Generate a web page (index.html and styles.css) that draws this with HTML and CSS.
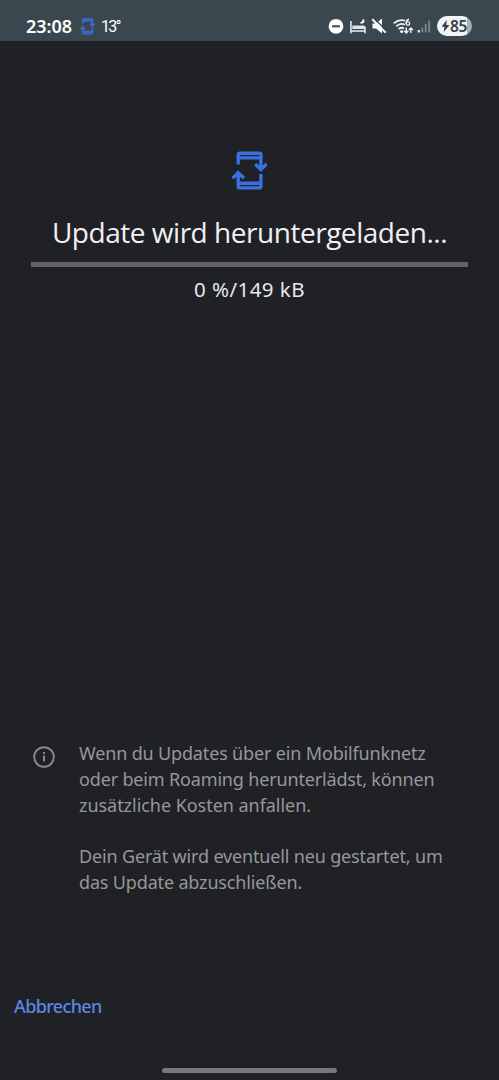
FILE: index.html
```html
<!DOCTYPE html>
<html lang="de">
<head>
<meta charset="utf-8">
<title>Systemupdate</title>
<link rel="stylesheet" href="styles.css">
</head>
<body>
<div class="screen">
  <header class="status">
    <span class="clock">23:08</span>
    <svg class="status-update" width="15" height="18" viewBox="0 0 35 40" fill="none" stroke="#3b68c8" stroke-width="4.400">
      <path d="M6.200 14.500V5a1.700 1.700 0 0 1 1.700-1.700h19.300a1.700 1.700 0 0 1 1.700 1.700V18M6.200 7.900h22.700M28.900 24V36.200a1.700 1.700 0 0 1-1.700 1.700H7.900a1.700 1.700 0 0 1-1.700-1.700V22M6.200 33.300h22.700M23.200 14.500l5.700 5.700 5.700-5.700M.5 27.800l5.700-5.700 5.700 5.700"/>
    </svg>
    <span class="temp">13°</span>
    <div class="tray">
      <svg width="107" height="24" viewBox="328 14 107 24">
        <circle cx="336" cy="26.300" r="7.400" fill="#fff"/>
        <path d="M332 26.300h8" stroke="#3b474e" stroke-width="2"/>
        <path d="M350.900 21v12.300M350.700 30.900H365.500M365 26.500v6.800" fill="none" stroke="#eef1f3" stroke-width="1.500"/>
        <path d="M352.300 25.600h11q1.700 0 1.700 1.700v1.700h-12.700z" fill="#dfe4e6"/>
        <path d="M362.700 18.800c.3 2-.9 3.500-3.300 3.900 2 1.700 4.800.7 5.100-1.500.1-1-.6-2-1.800-2.400z" fill="#fff"/>
        <path d="M372.500 23.500h3.500l6-5v15l-6-5h-3.500z" fill="#fff"/>
        <path d="M374 18.300l13 13" stroke="#3b474e" stroke-width="1.300"/>
        <path d="M372.300 19.300l13.300 13.300" stroke="#fff" stroke-width="2"/>
        <g fill="none" stroke="#eef1f3" stroke-width="1.800">
          <path d="M393.800 23.300Q399 18.700 405 20.700M396.200 26.300Q400.500 22.500 404.800 24.800M398.700 29Q401.500 26.800 404 28.500"/>
          <circle cx="407.900" cy="23.600" r="1.800" stroke-width="1.300"/>
          <path d="M406.100 23.400q0-3.500 2.900-4.100M406.300 27.500v5.500M404.200 30.800l2.100 2.200 2.100-2.200M410.900 33v-5M408.900 30l2-2 2 2" stroke-width="1.400"/>
        </g>
        <circle cx="401.700" cy="31.500" r="1.500" fill="#fff"/>
        <path d="M418.800 30v2.500" stroke="#fff" stroke-width="2"/>
        <path d="M422.300 27.500v5M425.700 24v8.500M429.200 20.500v12" stroke="#7c878d" stroke-width="1.800"/>
      </svg>
      <div class="battery">
        <svg width="9" height="12" viewBox="0 0 9 12"><path d="M5.800 0L.5 6.700h3L2.700 12l5.800-7H5.300z" fill="#344047"/></svg>
        <span>85</span>
      </div>
    </div>
  </header>
  <main class="progress">
    <svg class="hero" width="35" height="40" viewBox="0 0 35 40" fill="none" stroke="#3871df" stroke-width="3.400">
      <path d="M6.200 14.500V5a1.700 1.700 0 0 1 1.700-1.700h19.300a1.700 1.700 0 0 1 1.700 1.700V18M6.200 7.900h22.700M28.900 24V36.200a1.700 1.700 0 0 1-1.700 1.700H7.900a1.700 1.700 0 0 1-1.700-1.700V22M6.200 33.300h22.700M28.900 10v10M6.200 22v10M23.200 14l5.700 5.700 5.700-5.700M.5 28.300l5.700-5.700 5.700 5.700"/>
    </svg>
    <h1>Update wird heruntergeladen...</h1>
    <div class="bar"></div>
    <p class="amount">0 %/149 kB</p>
  </main>
  <section class="info">
    <svg width="24" height="24" viewBox="0 0 24 24" fill="none" stroke="#85868a" stroke-width="2"><circle cx="12" cy="12" r="9.800"/><path d="M12 10.500v6M12 7v2"/></svg>
    <div class="notes">
      <p>Wenn du Updates über ein Mobilfunknetz<br>oder beim Roaming herunterlädst, können<br><span class="loose">zusätzliche Kosten anfallen.</span></p>
      <p>Dein Gerät wird eventuell neu gestartet, um<br>das Update abzuschließen.</p>
    </div>
  </section>
  <button class="cancel">Abbrechen</button>
  <div class="handle"></div>
</div>
</body>
</html>
```
FILE: styles.css
```css
* { box-sizing: border-box; }
body { margin: 0; background: #202125; font-family: "Noto Sans", sans-serif; }
h1, p { margin: 0; }
svg { display: block; flex: none; }
.screen { width: 499px; height: 1080px; display: flex; flex-direction: column; overflow: hidden; }
.status { height: 41px; background: #3b474e; display: flex; align-items: center; padding: 11px 27px 0 26px; color: #fff; flex: none; }
.clock { font-size: 18px; font-weight: 600; line-height: 24px; width: 54px; white-space: nowrap; }
.temp { font: 16px/24px Roboto, sans-serif; margin-left: 6px; padding-top: 2px; letter-spacing: -1.700px; }
.tray { display: flex; align-items: center; margin-left: auto; gap: 2px; }
.battery { width: 35px; height: 20px; border-radius: 10px; background: linear-gradient(90deg, #f1f5f7 86%, #a6afb4 86%); display: flex; align-items: center; padding-left: 4px; color: #344047; font-size: 15.500px; font-weight: 600; letter-spacing: -.4px; line-height: 20px; }
.progress { height: 697px; padding: 109px 31px 0; display: flex; flex-direction: column; align-items: center; flex: none; }
h1 { margin-top: 22px; font: 400 28px/40px "Open Sans", sans-serif; letter-spacing: -.47px; white-space: nowrap; color: #f0f0f5; }
.bar { width: 437px; height: 5px; background: #626367; margin-top: 10px; }
.amount { font-size: 20.500px; line-height: 28px; letter-spacing: .45px; margin-top: 8px; color: #e8e8ec; }
.info { display: flex; padding: 3px 32px 0; gap: 23px; color: #96979b; height: 253px; flex: none; }
.info > svg { margin-top: 4px; }
.notes { font-size: 18px; line-height: 25.800px; letter-spacing: -.16px; white-space: nowrap; }
.loose { letter-spacing: -.04px; }
.notes p + p { margin-top: 25.800px; }
.cancel { align-self: flex-start; margin: 3px 0 0 14px; padding: 0; border: 0; background: none; color: #5c86e6; font: 500 18px/25px "Noto Sans", sans-serif; letter-spacing: -.65px; white-space: nowrap; }
.handle { width: 175px; height: 5px; border-radius: 3px; background: #77787b; margin: auto auto 7px; }
```
